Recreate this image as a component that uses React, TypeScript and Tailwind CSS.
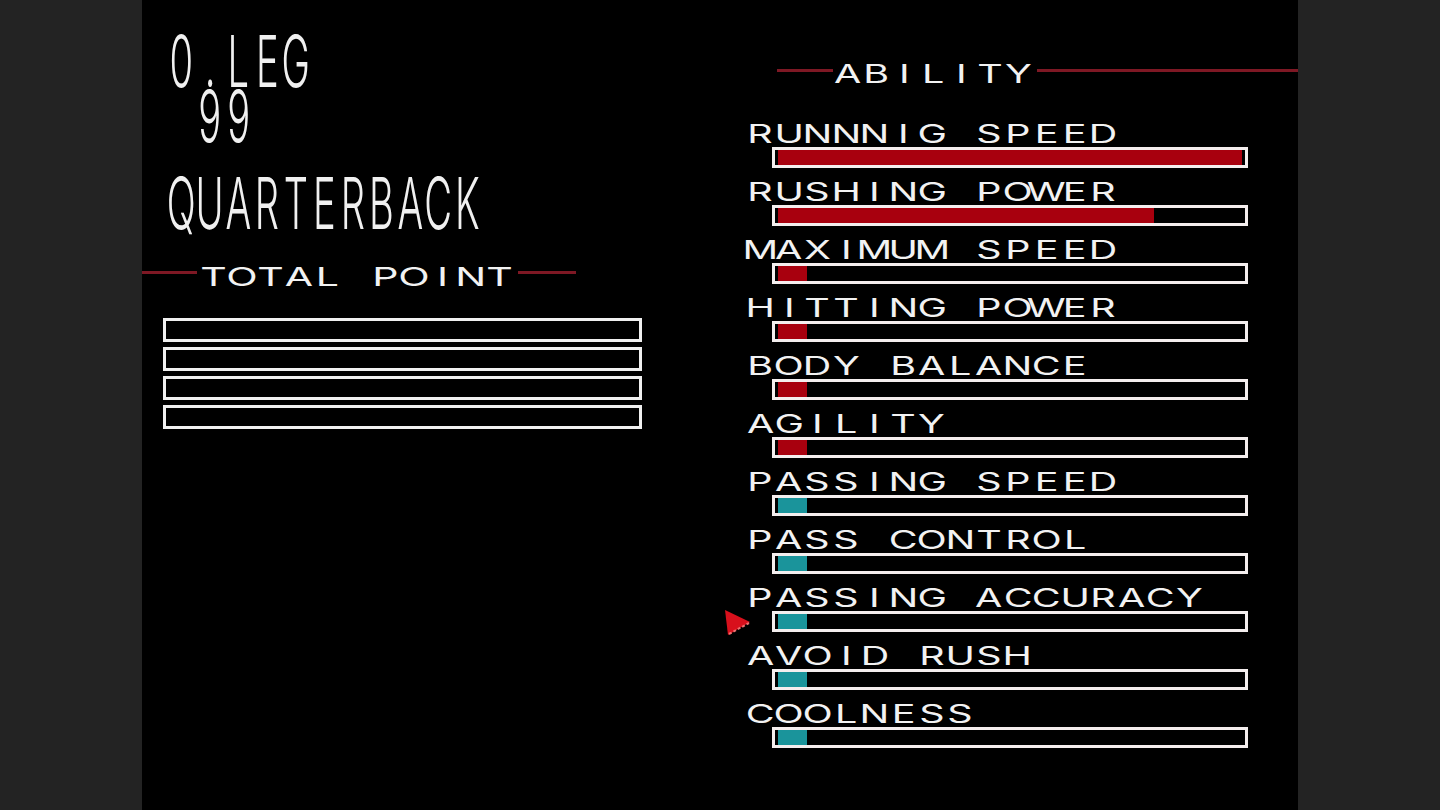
import React from "react";

type GlyphProps = { text: string; cell: string; glyph: string };

// Renders text on a fixed character grid, each glyph stretched inside its cell.
function Glyphs({ text, cell, glyph }: GlyphProps) {
  return (
    <span className="inline-flex">
      {[...text].map((c, i) => (
        <span key={i} className={cell}>
          <span className={glyph}>{c === " " ? "\u00a0" : c}</span>
        </span>
      ))}
    </span>
  );
}

const LABEL_CELL = "flex w-[28.6px] justify-center";
const LABEL_GLYPH = "inline-block [transform:scaleX(1.58)]";
const BIG_CELL = "flex w-[28.6px] justify-center";
const BIG_GLYPH = "inline-block [transform:scaleX(0.53)]";

type Stat = { name: string; pct: number; color: "red" | "teal" };

const stats: Stat[] = [
  { name: "RUNNNIG SPEED", pct: 100, color: "red" },
  { name: "RUSHING POWER", pct: 81, color: "red" },
  { name: "MAXIMUM SPEED", pct: 6.3, color: "red" },
  { name: "HITTING POWER", pct: 6.3, color: "red" },
  { name: "BODY BALANCE", pct: 6.3, color: "red" },
  { name: "AGILITY", pct: 6.3, color: "red" },
  { name: "PASSING SPEED", pct: 6.3, color: "teal" },
  { name: "PASS CONTROL", pct: 6.3, color: "teal" },
  { name: "PASSING ACCURACY", pct: 6.3, color: "teal" },
  { name: "AVOID RUSH", pct: 6.3, color: "teal" },
  { name: "COOLNESS", pct: 6.3, color: "teal" },
];

function Cursor() {
  return (
    <svg
      className="absolute left-[1px] top-[22px]"
      width="28"
      height="28"
      viewBox="0 0 28 28"
    >
      <polygon points="2,1 27,13 5,26" fill="#d8101c" />
      <line x1="6" y1="25" x2="26" y2="14" stroke="#f07070" strokeWidth="2" strokeDasharray="3 2" />
    </svg>
  );
}

function StatRow({ stat, cursor }: { stat: Stat; cursor?: boolean }) {
  return (
    <div className="relative flex h-[58px] flex-col">
      {cursor && <Cursor />}
      <div className="h-[22px] pl-[24px] text-[25px] font-normal leading-[22px] text-[#f2f2f2]">
        <Glyphs text={stat.name} cell={LABEL_CELL} glyph={LABEL_GLYPH} />
      </div>
      <div className="ml-[50px] mt-[2px] flex h-[21px] w-[476px] border-[3px] border-[#f4eeee] px-[3px]">
        <div
          className={
            stat.color === "red" ? "h-full bg-[#a8000e]" : "h-full bg-[#1a949b]"
          }
          style={{ width: `${stat.pct}%` }}
        />
      </div>
    </div>
  );
}

export default function App() {
  return (
    <div
      className="flex h-[810px] w-[1440px] bg-[#232323]"
      style={{ fontFamily: "Inter, 'Noto Sans', sans-serif" }}
    >
      <div className="w-[142px]" />
      <div className="flex h-full w-[1156px] bg-black">
        {/* player panel */}
        <div className="flex w-[580px] flex-col">
          <div className="pl-[25px] pt-[33px] text-[72px] font-light leading-[55px] text-[#f0f0f0]">
            <div>
              <Glyphs text="0.LEG" cell={BIG_CELL} glyph={BIG_GLYPH} />
            </div>
            <div>
              <Glyphs text=" 99" cell={BIG_CELL} glyph={BIG_GLYPH} />
            </div>
            <div className="mt-[32px]">
              <Glyphs text="QUARTERBACK" cell={BIG_CELL} glyph={BIG_GLYPH} />
            </div>
          </div>

          <div className="mt-[36px] flex items-start">
            <div className="mt-[5px] h-[3px] w-[55px] bg-[#7e1824]" />
            <div className="ml-[2px] h-[22px] text-[26px] font-normal leading-[22px] text-[#f2f2f2]">
              <Glyphs text="TOTAL POINT" cell={LABEL_CELL} glyph={LABEL_GLYPH} />
            </div>
            <div className="ml-[4px] mt-[5px] h-[3px] w-[58px] bg-[#7e1824]" />
          </div>

          <div className="ml-[21px] mt-[30px] flex w-[479px] flex-col gap-[5px]">
            <div className="h-[24px] border-[3px] border-[#f0f0f0]" />
            <div className="h-[24px] border-[3px] border-[#f0f0f0]" />
            <div className="h-[24px] border-[3px] border-[#f0f0f0]" />
            <div className="h-[24px] border-[3px] border-[#f0f0f0]" />
          </div>
        </div>

        {/* ability panel */}
        <div className="flex w-[576px] flex-col">
          <div className="mt-[63px] flex items-start">
            <div className="ml-[55px] mt-[6px] h-[3px] w-[56px] bg-[#7e1824]" />
            <div className="h-[22px] text-[25px] font-normal leading-[22px] text-[#f2f2f2]">
              <Glyphs text="ABILITY" cell={LABEL_CELL} glyph={LABEL_GLYPH} />
            </div>
            <div className="ml-[4px] mt-[6px] h-[3px] flex-1 bg-[#7e1824]" />
          </div>

          <div className="mt-[38px] flex flex-col">
            {stats.map((s, i) => (
              <StatRow key={s.name} stat={s} cursor={i === 8} />
            ))}
          </div>
        </div>
      </div>
      <div className="w-[142px]" />
    </div>
  );
}
